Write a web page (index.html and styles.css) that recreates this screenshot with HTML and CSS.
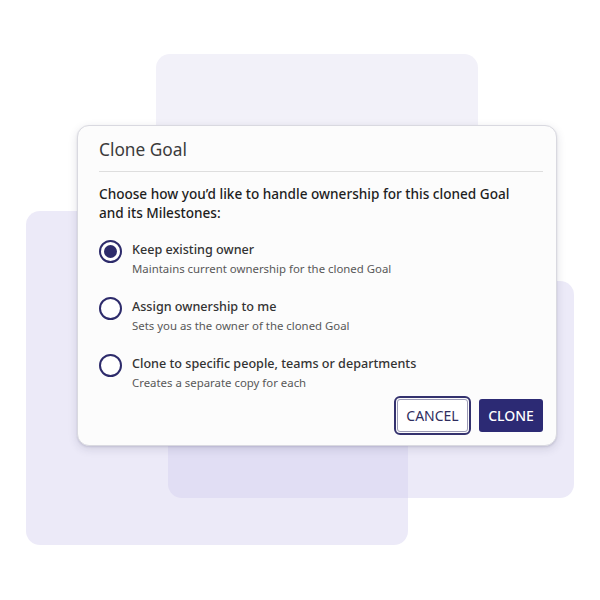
FILE: index.html
```html
<!DOCTYPE html>
<html lang="en">
<head>
<meta charset="utf-8">
<title>Clone Goal</title>
<link rel="stylesheet" href="styles.css">
</head>
<body>
<div class="stage">
  <div class="shape shape-top"></div>
  <div class="shape shape-left"></div>
  <div class="shape shape-right"></div>
  <div class="dialog">
    <h2 class="title">Clone Goal</h2>
    <p class="question">Choose how you’d like to handle ownership for this cloned Goal and its Milestones:</p>
    <div class="options">
      <div class="option">
        <span class="radio checked"></span>
        <div class="option-text">
          <div class="label">Keep existing owner</div>
          <div class="sub">Maintains current ownership for the cloned Goal</div>
        </div>
      </div>
      <div class="option">
        <span class="radio"></span>
        <div class="option-text">
          <div class="label">Assign ownership to me</div>
          <div class="sub">Sets you as the owner of the cloned Goal</div>
        </div>
      </div>
      <div class="option">
        <span class="radio"></span>
        <div class="option-text">
          <div class="label">Clone to specific people, teams or departments</div>
          <div class="sub">Creates a separate copy for each</div>
        </div>
      </div>
    </div>
    <div class="actions">
      <button class="btn btn-cancel">CANCEL</button>
      <button class="btn btn-clone">CLONE</button>
    </div>
  </div>
</div>
</body>
</html>
```

FILE: styles.css
```css
* { box-sizing: border-box; }
html, body { margin: 0; padding: 0; background: #ffffff; }
body { font-family: "Noto Sans", "Open Sans", sans-serif; }

.stage {
  position: relative;
  width: 600px;
  height: 600px;
  overflow: hidden;
}

.shape {
  position: absolute;
  border-radius: 14px;
}
.shape-top {
  left: 156px; top: 54px; width: 322px; height: 200px;
  background: #f2f1f9;
}
.shape-left {
  left: 26px; top: 211px; width: 382px; height: 334px;
  background: rgba(209, 204, 238, 0.42);
}
.shape-right {
  left: 168px; top: 281px; width: 406px; height: 217px;
  background: rgba(209, 204, 238, 0.42);
}

.dialog {
  position: absolute;
  left: 77px; top: 125px;
  width: 480px; height: 321px;
  background: #fcfcfc;
  border: 1px solid #d9d9e0;
  border-radius: 12px;
  box-shadow: 0 3px 10px rgba(40, 40, 80, 0.14), 0 1px 2px rgba(40,40,80,0.12);
  padding: 12px 13px 13px 21px;
  display: flex;
  flex-direction: column;
}

.title {
  margin: 0;
  font-size: 17.3px;
  line-height: 24px;
  font-weight: 400;
  color: #3b3b3b;
  padding-bottom: 9px;
  border-bottom: 1px solid #dedede;
}

.question {
  margin: 12px 0 0;
  font-size: 13.6px;
  line-height: 19px;
  font-weight: 500;
  color: #1e1e1e;
  padding-right: 20px;
}

.options {
  margin-top: 19px;
  display: flex;
  flex-direction: column;
  gap: 20px;
}
.option {
  display: flex;
  align-items: flex-start;
  gap: 10px;
}
.radio {
  flex: none;
  width: 23px; height: 23px;
  margin-top: -1px;
  border: 2px solid #2d2b6b;
  border-radius: 50%;
  background: #fff;
  display: flex;
  align-items: center;
  justify-content: center;
}
.radio.checked::after {
  content: "";
  width: 13px; height: 13px;
  border-radius: 50%;
  background: #2d2b6b;
}
.label {
  font-size: 12.6px;
  line-height: 18px;
  font-weight: 500;
  color: #333333;
}
.sub {
  margin-top: 1px;
  font-size: 11.4px;
  line-height: 18px;
  font-weight: 400;
  color: #585858;
}

.actions {
  margin-top: auto;
  display: flex;
  justify-content: flex-end;
  align-items: center;
  gap: 8px;
}
.btn {
  font-family: "Noto Sans", "Open Sans", sans-serif;
  font-size: 14px;
  cursor: pointer;
  padding: 0;
}
.btn-cancel {
  width: 71px; height: 33px;
  background: #ffffff;
  color: #2f2d5e;
  font-weight: 400;
  border: 1px solid #9d9cb6;
  border-radius: 3px;
  outline: 2px solid #34326e;
  outline-offset: 1px;
  margin-right: 3px;
}
.btn-clone {
  width: 64px; height: 33px;
  background: #2c2a74;
  color: #ffffff;
  font-weight: 500;
  border: none;
  border-radius: 3px;
}
```
